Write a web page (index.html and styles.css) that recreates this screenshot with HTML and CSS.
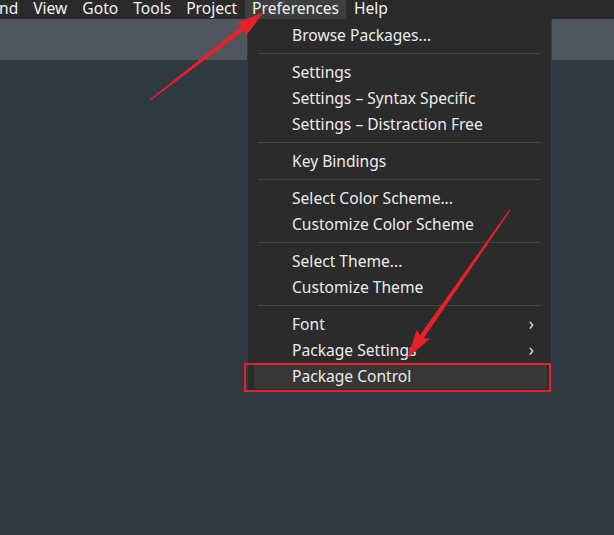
FILE: index.html
```html
<!DOCTYPE html>
<html>
<head>
<meta charset="utf-8">
<link rel="stylesheet" href="styles.css">
</head>
<body>
<div class="app">
  <div class="menubar">
    <span class="mi first">nd</span>
    <span class="mi">View</span>
    <span class="mi">Goto</span>
    <span class="mi">Tools</span>
    <span class="mi">Project</span>
    <span class="mi active">Preferences</span>
    <span class="mi">Help</span>
  </div>
  <div class="tabbar"></div>
  <div class="editor"></div>

  <div class="dropdown">
    <div class="item">Browse Packages...</div>
    <div class="sep"></div>
    <div class="item">Settings</div>
    <div class="item">Settings – Syntax Specific</div>
    <div class="item">Settings – Distraction Free</div>
    <div class="sep"></div>
    <div class="item">Key Bindings</div>
    <div class="sep"></div>
    <div class="item">Select Color Scheme...</div>
    <div class="item">Customize Color Scheme</div>
    <div class="sep"></div>
    <div class="item">Select Theme...</div>
    <div class="item">Customize Theme</div>
    <div class="sep"></div>
    <div class="item sub">Font<span class="chev">›</span></div>
    <div class="item sub">Package Settings<span class="chev">›</span></div>
    <div class="item hl">Package Control</div>
  </div>
  <div class="redbox"></div>

  <svg class="arrows" width="614" height="535" viewBox="0 0 614 535">
    <polygon fill="#e8202a" points="150.4,100.6 244.9,29.9 245.9,36.0 264,12 236.1,23.4 241.9,25.9 149.6,99.4"/>
    <polygon fill="#e8202a" points="510.6,210.4 423.9,338.1 430.2,338.8 407,358 417.0,329.6 419.8,335.3 509.4,209.6"/>
  </svg>
</div>
</body>
</html>
```

FILE: styles.css
```css
html, body {
  margin: 0;
  padding: 0;
}
body {
  width: 614px;
  height: 535px;
  overflow: hidden;
  font-family: "Noto Sans", "Open Sans", sans-serif;
}
.app {
  position: relative;
  width: 614px;
  height: 535px;
  display: flex;
  flex-direction: column;
}
.menubar {
  height: 19px;
  background: #2a2a2a;
  display: flex;
  align-items: stretch;
  white-space: nowrap;
}
.mi {
  color: #f2f2f2;
  font-size: 15.6px;
  line-height: 17px;
  padding: 0 7.5px;
}
.mi.first {
  padding-left: 0;
  margin-left: -1px;
}
.mi.active {
  background: #3e3e3e;
}
.tabbar {
  height: 41px;
  background: #4f565e;
}
.editor {
  flex: 1;
  background: #303841;
}
.dropdown {
  position: absolute;
  left: 247px;
  top: 19px;
  width: 305px;
  padding: 3px 0 3px;
  background: #2b2b2b;
  border: 1px solid #3a3a3a;
  border-top: none;
  border-radius: 0 0 5px 5px;
  box-sizing: border-box;
  height: 374px;
}
.item {
  height: 26px;
  line-height: 26px;
  font-size: 15.6px;
  color: #ececec;
  padding-left: 44px;
  position: relative;
  white-space: nowrap;
}
.chev {
  position: absolute;
  right: 17px;
  top: -1px;
  font-size: 18px;
  color: #d8d8d8;
}
.sep {
  height: 11px;
  display: flex;
  align-items: center;
  padding: 0 10px;
}
.sep::before {
  content: "";
  flex: 1;
  height: 1px;
  background: #444444;
}
.item.hl {
  background: #373737;
  border-radius: 4px;
  margin: 0 4px 0 6px;
  padding-left: 38px;
}
.redbox {
  position: absolute;
  left: 244px;
  top: 363px;
  width: 307px;
  height: 29px;
  border: 2px solid #e8202a;
  box-sizing: border-box;
}
.arrows {
  position: absolute;
  left: 0;
  top: 0;
  pointer-events: none;
}
```
